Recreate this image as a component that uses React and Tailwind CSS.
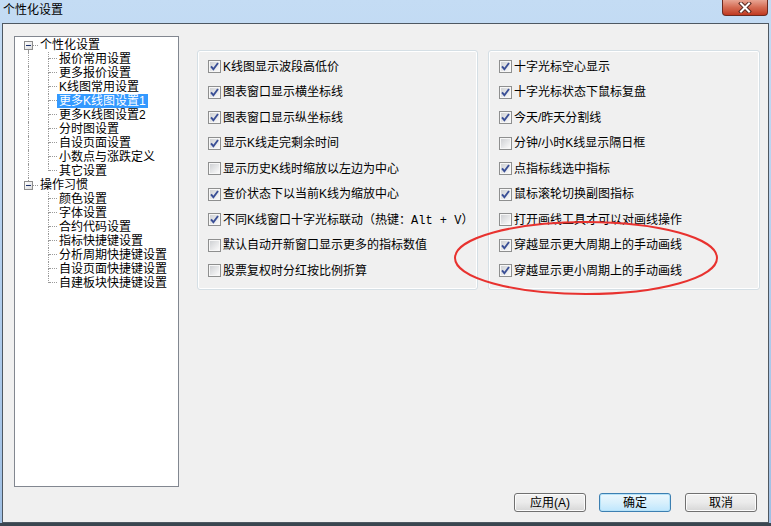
import React from "react";

const CJK = "font-['Liberation_Sans','Noto_Sans_CJK_SC',sans-serif]";

function Box({ checked }) {
  return (
    <svg width="13" height="13" viewBox="0 0 13 13" className="shrink-0">
      <defs>
        <linearGradient id="cbg" x1="0" y1="0" x2="1" y2="1">
          <stop offset="0" stopColor="#cfd1d4" />
          <stop offset="1" stopColor="#fafafa" />
        </linearGradient>
      </defs>
      <rect x="0.5" y="0.5" width="12" height="12" fill="#f7f7f7" stroke="#8e8f8f" />
      <rect x="2" y="2" width="9" height="9" fill="url(#cbg)" />
      {checked && (
        <path d="M3 6.3 L5.4 9.2 L10 3" fill="none" stroke="#3a4f96" strokeWidth="1.9" />
      )}
    </svg>
  );
}

function Row({ checked, children }) {
  return (
    <div className="flex items-center gap-[2px] h-[25.5px]">
      <Box checked={checked} />
      <span className="block h-[14px] text-[12px] leading-[14px] text-black whitespace-nowrap">{children}</span>
    </div>
  );
}

function Panel({ items, w }) {
  return (
    <div className={`${w} h-[240px] rounded-[3px] border border-[#d5dfe5] pt-[3px] pl-[10px] shadow-[inset_0_0_0_1px_#ffffff]`}>
      {items.map((it, i) => (
        <Row key={i} checked={it[0]}>{it[1]}</Row>
      ))}
    </div>
  );
}

const leftItems = [
  [true, "K线图显示波段高低价"],
  [true, "图表窗口显示横坐标线"],
  [true, "图表窗口显示纵坐标线"],
  [true, "显示K线走完剩余时间"],
  [false, "显示历史K线时缩放以左边为中心"],
  [true, "查价状态下以当前K线为缩放中心"],
  [true, (
    <>
      不同K线窗口十字光标联动（热键：<span className="font-['Liberation_Mono',monospace]">Alt + V</span>）
    </>
  )],
  [false, "默认自动开新窗口显示更多的指标数值"],
  [false, "股票复权时分红按比例折算"],
];

const rightItems = [
  [true, "十字光标空心显示"],
  [true, "十字光标状态下鼠标复盘"],
  [true, "今天/昨天分割线"],
  [false, "分钟/小时K线显示隔日框"],
  [true, "点指标线选中指标"],
  [true, "鼠标滚轮切换副图指标"],
  [false, "打开画线工具才可以对画线操作"],
  [true, "穿越显示更大周期上的手动画线"],
  [true, "穿越显示更小周期上的手动画线"],
];

const group1 = [
  "报价常用设置",
  "更多报价设置",
  "K线图常用设置",
  "更多K线图设置1",
  "更多K线图设置2",
  "分时图设置",
  "自设页面设置",
  "小数点与涨跌定义",
  "其它设置",
];
const group2 = [
  "颜色设置",
  "字体设置",
  "合约代码设置",
  "指标快捷键设置",
  "分析周期快捷键设置",
  "自设页面快捷键设置",
  "自建板块快捷键设置",
];

function RootRow({ label, first }) {
  return (
    <div className="flex h-[14px] items-stretch">
      <div className="ml-[9px] w-[9px] flex flex-col items-center">
        <div className={`h-[3px] w-0 ${first ? "" : "border-l border-dotted border-[#9a9a9a]"}`} />
        <div className="h-[9px] w-[9px] shrink-0 border border-[#8c8c8c] bg-gradient-to-br from-white to-[#dcdcdc] flex items-center justify-center">
          <div className="w-[5px] h-[1px] bg-[#1b2f6a]" />
        </div>
        <div className={`flex-1 w-0 ${first ? "border-l border-dotted border-[#9a9a9a]" : ""}`} />
      </div>
      <div className="w-[5px] self-center border-t border-dotted border-[#9a9a9a]" />
      <span className="block h-[14px] ml-[2px] text-[12px] leading-[14px] text-black whitespace-nowrap">{label}</span>
    </div>
  );
}

function ChildRow({ label, rootLine, last, selected }) {
  return (
    <div className="flex h-[14px] items-stretch">
      <div className="w-[33px] shrink-0">
        {rootLine && <div className="ml-[13px] h-full w-0 border-l border-dotted border-[#9a9a9a]" />}
      </div>
      <div className="w-[9px] shrink-0 flex flex-col">
        <div className="h-[7px] border-l border-dotted border-[#9a9a9a] flex items-end">
          <div className="w-[8px] border-b border-dotted border-[#9a9a9a]" />
        </div>
        <div className={`flex-1 ${last ? "" : "border-l border-dotted border-[#9a9a9a]"}`} />
      </div>
      <span
        className={`block h-[14px] px-[2px] text-[12px] leading-[14px] whitespace-nowrap ${
          selected ? "bg-[#3399ff] text-white" : "text-black"
        }`}
      >
        {label}
      </span>
    </div>
  );
}

function Btn({ children, primary }) {
  return (
    <div
      className={`w-[72px] h-[19px] rounded-[3px] border flex items-center justify-center text-[12px] leading-[14px] text-black ${
        primary
          ? "border-[#3c7fb1] bg-gradient-to-b from-[#ecf7fd] via-[#d9f0fc] to-[#bee6fd] shadow-[inset_0_0_0_1px_#b6e2f8]"
          : "border-[#707070] bg-gradient-to-b from-[#f2f2f2] via-[#ebebeb] to-[#d6d6d6] shadow-[inset_0_0_0_1px_#fcfcfc]"
      }`}
    >
      {children}
    </div>
  );
}

export default function App() {
  return (
    <div className={`relative w-[771px] h-[526px] overflow-hidden flex flex-col bg-gradient-to-b from-[#c4dcf4] via-[#b3cfee] to-[#9fbfe3] ${CJK}`}>
      {/* title bar */}
      <div className="h-[23px] flex items-start justify-between pl-[3px]">
        <span className="mt-[3px] text-[12px] leading-[14px] text-black">个性化设置</span>
        <div className="mr-[3px] w-[46px] h-[16px] rounded-b-[4px] border border-t-0 border-[#6b2a20] bg-gradient-to-b from-[#e8a493] via-[#d46a52] to-[#c0381f] flex items-center justify-center">
          <svg width="14" height="11" viewBox="0 0 14 11">
            <path d="M3 1.5 L11 9.5 M11 1.5 L3 9.5" stroke="#5a2a22" strokeWidth="4" strokeLinecap="square" />
            <path d="M3 1.5 L11 9.5 M11 1.5 L3 9.5" stroke="#ffffff" strokeWidth="2" strokeLinecap="square" />
          </svg>
        </div>
      </div>

      {/* client */}
      <div className="ml-[2px] w-[767px] h-[500px] border border-[#4e5862] bg-[#f0f0f0] flex flex-col pl-[11px] pt-[12px]">
        <div className="flex items-start">
          {/* tree */}
          <div className="w-[165px] h-[451px] shrink-0 border border-[#828790] bg-white pt-[1px]">
            <RootRow label="个性化设置" first />
            {group1.map((g, i) => (
              <ChildRow key={g} label={g} rootLine last={i === group1.length - 1} selected={i === 3} />
            ))}
            <RootRow label="操作习惯" />
            {group2.map((g, i) => (
              <ChildRow key={g} label={g} last={i === group2.length - 1} />
            ))}
          </div>
          {/* panels */}
          <div className="ml-[18px] mt-[14px] flex gap-[10px]">
            <Panel items={leftItems} w="w-[281px]" />
            <Panel items={rightItems} w="w-[272px]" />
          </div>
        </div>
        <div className="mt-[6px] flex justify-end pr-[11px]">
          <Btn>应用(A)</Btn>
          <div className="w-[13px]" />
          <Btn primary>确定</Btn>
          <div className="w-[14px]" />
          <Btn>取消</Btn>
        </div>
      </div>
      <div className="flex-1 bg-[#3a4650]" />

      {/* red annotation ellipse */}
      <svg className="absolute left-0 top-0 pointer-events-none" width="771" height="526">
        <ellipse cx="586" cy="258" rx="131" ry="36" fill="none" stroke="#e8322f" strokeWidth="2" />
      </svg>
    </div>
  );
}
